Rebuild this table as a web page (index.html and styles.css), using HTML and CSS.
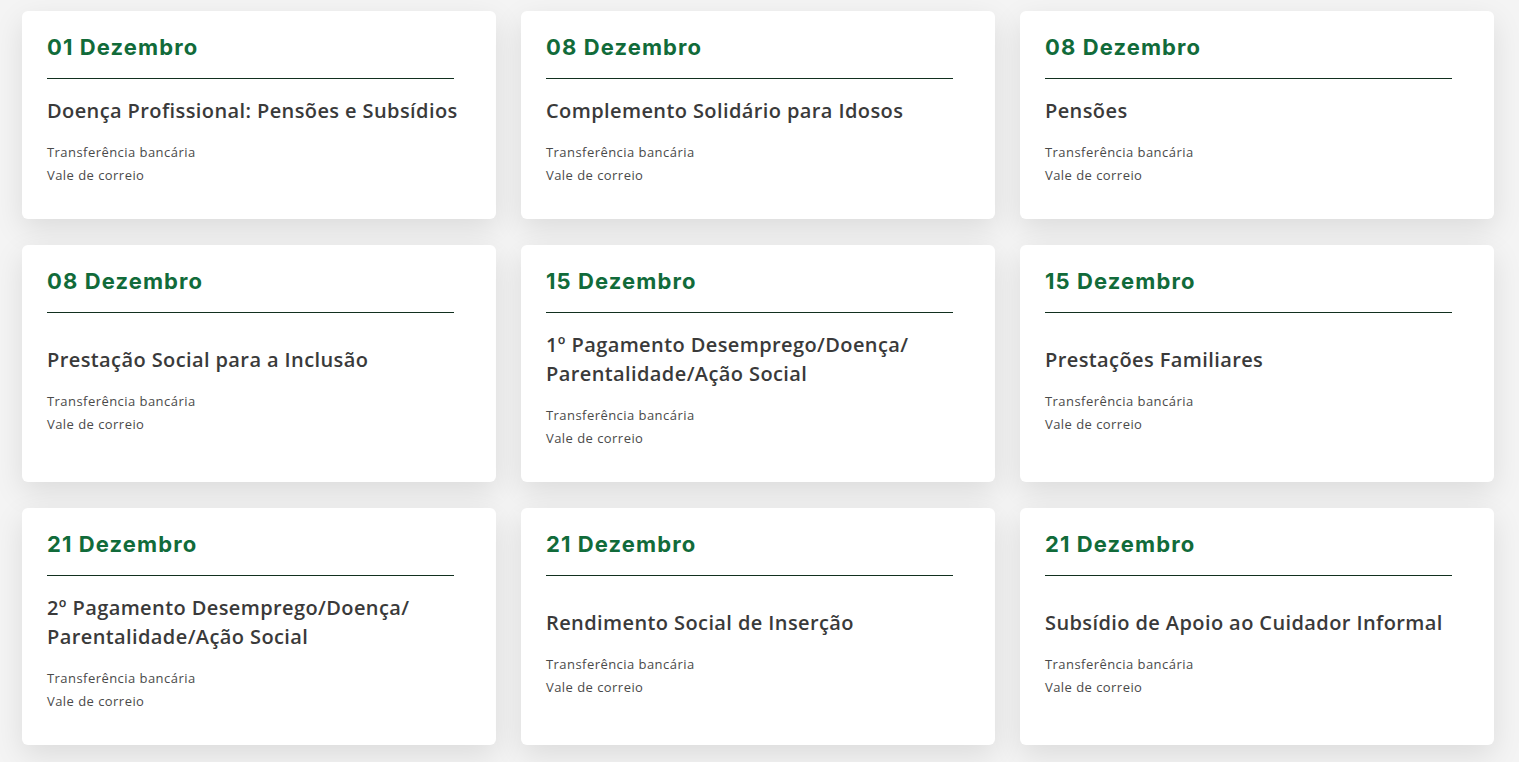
FILE: index.html
```html
<!DOCTYPE html>
<html lang="pt">
<head>
<meta charset="utf-8">
<title>Calendário de pagamentos</title>
<link rel="stylesheet" href="styles.css">
</head>
<body>
<main class="grid">
  <article class="card">
    <h2 class="date">01 Dezembro</h2>
    <div class="body">
      <h3 class="title">Doença Profissional: Pensões e Subsídios</h3>
      <p class="method">Transferência bancária</p>
      <p class="method">Vale de correio</p>
    </div>
  </article>
  <article class="card">
    <h2 class="date">08 Dezembro</h2>
    <div class="body">
      <h3 class="title">Complemento Solidário para Idosos</h3>
      <p class="method">Transferência bancária</p>
      <p class="method">Vale de correio</p>
    </div>
  </article>
  <article class="card">
    <h2 class="date">08 Dezembro</h2>
    <div class="body">
      <h3 class="title">Pensões</h3>
      <p class="method">Transferência bancária</p>
      <p class="method">Vale de correio</p>
    </div>
  </article>
  <article class="card">
    <h2 class="date">08 Dezembro</h2>
    <div class="body">
      <h3 class="title">Prestação Social para a Inclusão</h3>
      <p class="method">Transferência bancária</p>
      <p class="method">Vale de correio</p>
    </div>
  </article>
  <article class="card">
    <h2 class="date">15 Dezembro</h2>
    <div class="body">
      <h3 class="title">1º Pagamento Desemprego/Doença/<br>Parentalidade/Ação Social</h3>
      <p class="method">Transferência bancária</p>
      <p class="method">Vale de correio</p>
    </div>
  </article>
  <article class="card">
    <h2 class="date">15 Dezembro</h2>
    <div class="body">
      <h3 class="title">Prestações Familiares</h3>
      <p class="method">Transferência bancária</p>
      <p class="method">Vale de correio</p>
    </div>
  </article>
  <article class="card">
    <h2 class="date">21 Dezembro</h2>
    <div class="body">
      <h3 class="title">2º Pagamento Desemprego/Doença/<br>Parentalidade/Ação Social</h3>
      <p class="method">Transferência bancária</p>
      <p class="method">Vale de correio</p>
    </div>
  </article>
  <article class="card">
    <h2 class="date">21 Dezembro</h2>
    <div class="body">
      <h3 class="title">Rendimento Social de Inserção</h3>
      <p class="method">Transferência bancária</p>
      <p class="method">Vale de correio</p>
    </div>
  </article>
  <article class="card">
    <h2 class="date">21 Dezembro</h2>
    <div class="body">
      <h3 class="title">Subsídio de Apoio ao Cuidador Informal</h3>
      <p class="method">Transferência bancária</p>
      <p class="method">Vale de correio</p>
    </div>
  </article>
</main>
</body>
</html>
```

FILE: styles.css
```css
html, body {
  margin: 0;
  padding: 0;
  background: #f4f4f4;
}

body {
  font-family: "Open Sans", "Noto Sans", sans-serif;
}

.grid {
  display: grid;
  grid-template-columns: repeat(3, 474px);
  column-gap: 25px;
  row-gap: 26px;
  padding: 11px 25px 20px 22px;
}

.card {
  background: #ffffff;
  border-radius: 6px;
  box-shadow: 0 10px 30px rgba(0, 0, 0, 0.1);
  padding: 20px 25px 0 25px;
  display: flex;
  flex-direction: column;
}

.date {
  margin: 0;
  font-family: "Inter", "Lato", sans-serif;
  font-weight: 700;
  font-size: 22px;
  line-height: 32px;
  color: #116b3a;
  letter-spacing: 1.1px;
  padding-bottom: 15px;
  border-bottom: 1px solid #12301f;
  width: 407px;
}

.body {
  flex: 1;
  display: flex;
  flex-direction: column;
  justify-content: center;
  padding: 17px 0 32px;
}

.title {
  margin: 0 0 16px;
  font-size: 20px;
  font-weight: 600;
  line-height: 29px;
  color: #3a3a3a;
  letter-spacing: 0.4px;
}

.method {
  margin: 0;
  font-size: 13px;
  line-height: 23px;
  color: #4a4a4a;
  letter-spacing: 0.45px;
}
```
